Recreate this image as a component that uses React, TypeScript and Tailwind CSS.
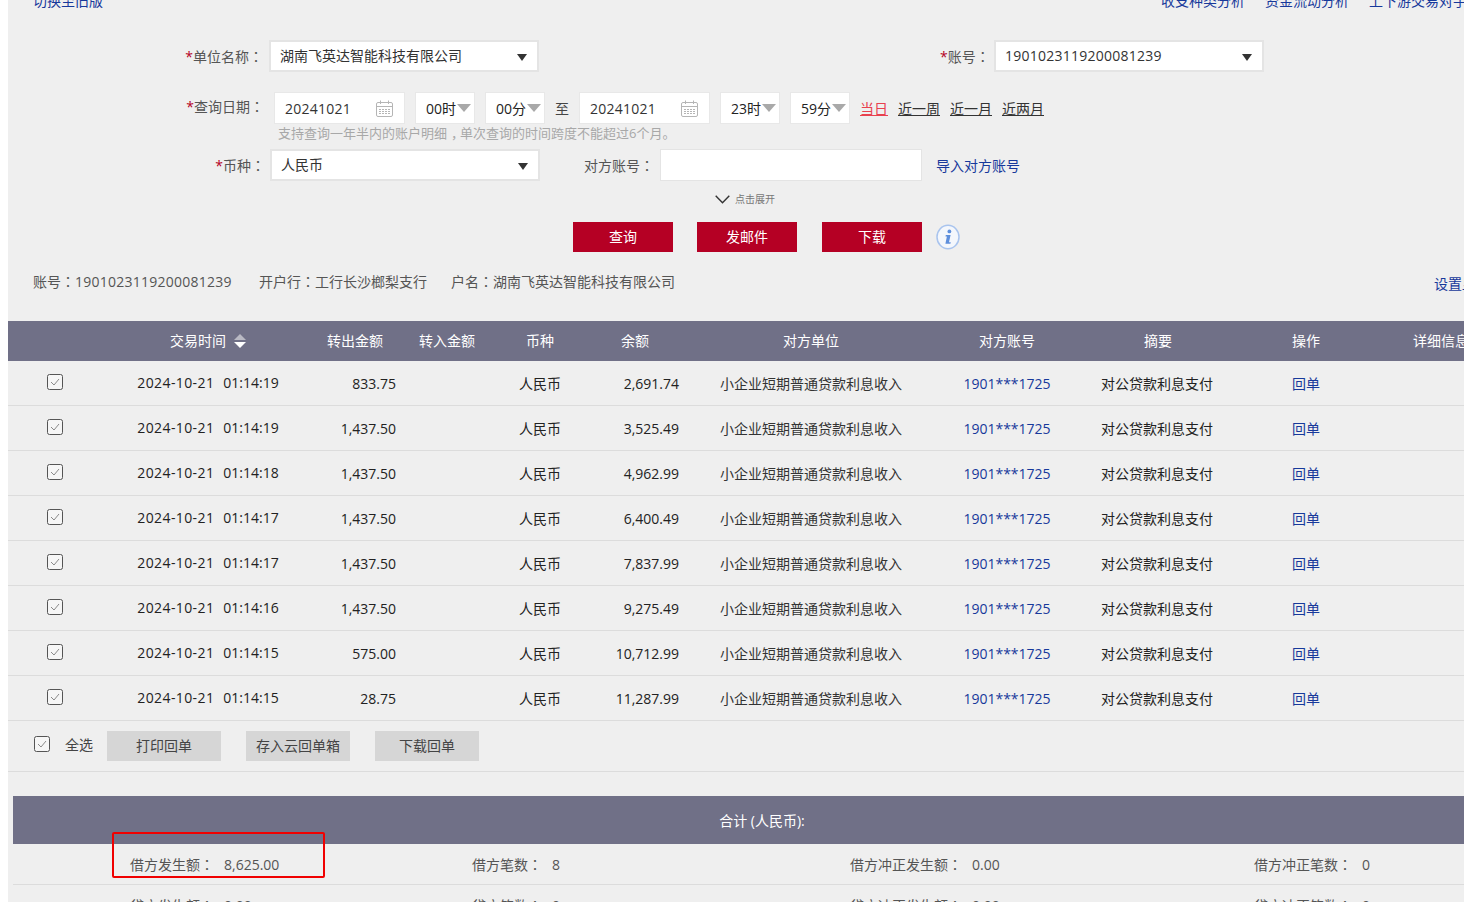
const rows = [
  { time: '01:14:19', out: '833.75', balance: '2,691.74' },
  { time: '01:14:19', out: '1,437.50', balance: '3,525.49' },
  { time: '01:14:18', out: '1,437.50', balance: '4,962.99' },
  { time: '01:14:17', out: '1,437.50', balance: '6,400.49' },
  { time: '01:14:17', out: '1,437.50', balance: '7,837.99' },
  { time: '01:14:16', out: '1,437.50', balance: '9,275.49' },
  { time: '01:14:15', out: '575.00', balance: '10,712.99' },
  { time: '01:14:15', out: '28.75', balance: '11,287.99' },
];

// TC cut of the font centres the full-width colon, like the reference
const Colon = () => <span className="font-['Noto_Sans_CJK_TC',sans-serif]">：</span>;

const Caret = () => (
  <span className="w-0 h-0 mt-[3px] border-x-[5.5px] border-x-transparent border-t-[7px] border-t-[#333]" />
);

const GreyCaret = () => (
  <span className="w-0 h-0 border-x-[7px] border-x-transparent border-t-[8px] border-t-[#a9a9a9]" />
);

const Check = () => (
  <svg width="16" height="16" viewBox="0 0 16 16" className="block">
    <rect x="0.5" y="0.5" width="15" height="15" rx="2" fill="#f6f6f6" stroke="#555" />
    <path d="M4 8 L7 11 L12 5" fill="none" stroke="#8a8a8a" />
  </svg>
);

const Calendar = () => (
  <svg width="17" height="17" viewBox="0 0 17 17" fill="none" stroke="#b5b5b5">
    <rect x="0.5" y="2.5" width="16" height="14" rx="1.5" />
    <path d="M0.5 6.5 H16.5 M4.5 0.5 V4 M12.5 0.5 V4" />
    <path d="M3 9.5 H14 M3 11.5 H14 M3 13.5 H14" strokeDasharray="2 1" />
  </svg>
);

const Label = ({ text, className }: { text: string; className: string }) => (
  <div className={`text-[14px] text-[#555] whitespace-nowrap ${className}`}>
    <span className="text-[#b50024]">*</span>
    {text}
    <Colon />
  </div>
);

const Select = ({ value, numeric, className }: { value: string; numeric?: boolean; className: string }) => (
  <div className={`h-8 bg-white border-2 border-[#e4e4e4] flex items-center justify-between pl-[9px] pr-[10px] text-[14px] text-[#333] ${className}`}>
    <span className={numeric ? 'tracking-[0.25px] -mt-[2px]' : '-mt-[2px]'}>{value}</span>
    <Caret />
  </div>
);

const DateBox = ({ value }: { value: string }) => (
  <div className="w-[131px] h-8 bg-white border border-[#e8e8e8] flex items-center justify-between pl-[10px] pr-[11px] text-[14px] text-[#333]">
    <span className="tracking-[0.25px]">{value}</span>
    <Calendar />
  </div>
);

const TimeBox = ({ value }: { value: string }) => (
  <div className="w-[60px] h-8 bg-white border border-[#e8e8e8] flex items-center pl-[10px] gap-[1px] text-[14px] text-[#222] whitespace-nowrap">
    {value}
    <GreyCaret />
  </div>
);

const RedButton = ({ text }: { text: string }) => (
  <div className="w-[100px] h-[30px] pb-[2px] bg-[#b50024] text-white text-[14px] flex items-center justify-center">{text}</div>
);

const GreyButton = ({ text, className }: { text: string; className: string }) => (
  <div className={`h-[30px] pb-[2px] bg-[#d6d6d6] text-[14px] text-[#444] flex items-center justify-center ${className}`}>{text}</div>
);

const Stat = ({ label, value, className }: { label: string; value: string; className: string }) => (
  <div className={`flex shrink-0 gap-[10px] whitespace-nowrap ${className}`}>
    <span>
      {label}
      <Colon />
    </span>
    <span>{value}</span>
  </div>
);

const App = () => {
  return (
    <div className="w-[1464px] h-[902px] overflow-hidden bg-white pl-2 font-['Open_Sans','Noto_Sans_CJK_SC',sans-serif]">
      <div className="w-[1560px] h-[1000px] bg-[#efefef] -mt-[9px]">
        {/* top links */}
        <div className="h-[49px] flex text-[14px] text-[#17399b] leading-5 whitespace-nowrap">
          <span className="ml-[25px] w-[1128px]">切换至旧版</span>
          <span className="mr-5">收支种类分析</span>
          <span className="mr-5">资金流动分析</span>
          <span>上下游交易对手</span>
        </div>

        {/* query form */}
        <div className="flex items-center h-8">
          <Label text="单位名称" className="w-[261px] text-right pr-[6px]" />
          <Select value="湖南飞英达智能科技有限公司" className="w-[270px]" />
          <Label text="账号" className="ml-[401px] w-[54px]" />
          <Select value="1901023119200081239" numeric className="w-[270px]" />
        </div>

        <div className="flex items-center h-8 mt-5">
          <Label text="查询日期" className="w-[266px] text-right pr-[10px] -mt-1" />
          <DateBox value="20241021" />
          <div className="ml-[10px]"><TimeBox value="00时" /></div>
          <div className="ml-[10px]"><TimeBox value="00分" /></div>
          <span className="w-[34px] text-center text-[14px] text-[#444]">至</span>
          <DateBox value="20241021" />
          <div className="ml-[10px]"><TimeBox value="23时" /></div>
          <div className="ml-[10px]"><TimeBox value="59分" /></div>
          <span className="ml-[10px] text-[14px] text-[#e8414f] underline">当日</span>
          <span className="ml-[10px] text-[14px] text-[#333] underline">近一周</span>
          <span className="ml-[10px] text-[14px] text-[#333] underline">近一月</span>
          <span className="ml-[10px] text-[14px] text-[#333] underline">近两月</span>
        </div>

        <div className="h-[25px] pl-[270px] text-[13px] leading-[19px] text-[#a8a8a8] whitespace-nowrap">
          支持查询一年半内的账户明细<span className="pl-1 tracking-[-4px]">，</span>单次查询的时间跨度不能超过6个月。
        </div>

        <div className="flex items-center h-8">
          <Label text="币种" className="w-[262px] text-right pr-[5px]" />
          <Select value="人民币" className="w-[270px]" />
          <div className="ml-[44px] w-[76px] text-[14px] text-[#555] whitespace-nowrap">对方账号<Colon /></div>
          <div className="w-[262px] h-8 bg-white border border-[#e4e4e4]" />
          <span className="ml-[14px] text-[14px] text-[#17399b]">导入对方账号</span>
        </div>

        <div className="flex items-center h-[18px] mt-[9px] pl-[707px] gap-[5px]">
          <svg width="15" height="9" viewBox="0 0 15 9" fill="none" stroke="#333" strokeWidth="1.4">
            <path d="M0.7 0.7 L7.5 7.8 L14.3 0.7" />
          </svg>
          <span className="text-[10px] text-[#777]">点击展开</span>
        </div>

        <div className="flex items-center mt-[14px] pl-[565px]">
          <RedButton text="查询" />
          <div className="ml-6"><RedButton text="发邮件" /></div>
          <div className="ml-[25px]"><RedButton text="下载" /></div>
          <svg width="24" height="26" viewBox="0 0 24 26" className="ml-[14px]">
            <ellipse cx="12" cy="13" rx="11" ry="11.8" fill="#f4f7fc" stroke="#a9c4ee" strokeWidth="1.5" />
            <circle cx="13.4" cy="7.4" r="1.9" fill="#5e8fdc" />
            <path d="M9.8 11 H14.6 L13 18.2 L14.8 18.2 L14.4 19.8 H9.4 L10.9 12.6 H9.5 Z" fill="#5e8fdc" />
          </svg>
        </div>

        <div className="flex items-center h-5 mt-[19px] pl-[25px] text-[14px] text-[#555] whitespace-nowrap">
          <span className="w-[226px]">账号<Colon /><span className="tracking-[0.25px]">1901023119200081239</span></span>
          <span className="w-[192px]">开户行<Colon />工行长沙榔梨支行</span>
          <span className="w-[983px]">户名<Colon />湖南飞英达智能科技有限公司</span>
          <span className="text-[#17399b] mt-1">设置显示</span>
        </div>

        {/* transactions table */}
        <div className="mt-[30px] h-10 pb-[2px] bg-[#707087] text-white text-[14px] flex items-center text-center">
          <div className="w-[94px]" />
          <div className="w-[212px] flex items-center justify-center gap-2">
            交易时间
            <span className="flex flex-col gap-[2px] mt-[2px]">
              <span className="w-0 h-0 border-x-[6px] border-x-transparent border-b-[6px] border-b-[#b9b9c4]" />
              <span className="w-0 h-0 border-x-[6px] border-x-transparent border-t-[6px] border-t-white" />
            </span>
          </div>
          <div className="w-[82px]">转出金额</div>
          <div className="w-[102px]">转入金额</div>
          <div className="w-[84px]">币种</div>
          <div className="w-[106px]">余额</div>
          <div className="w-[246px]">对方单位</div>
          <div className="w-[146px]">对方账号</div>
          <div className="w-[154px] pl-[2px]">摘要</div>
          <div className="w-[144px]">操作</div>
          <div className="w-[126px]">详细信息</div>
        </div>
        {rows.map((row, i) => (
          <div key={i} className="h-[45px] border-b border-[#dcdcdc] flex items-center text-[14px] text-[#222] text-center">
            <div className="w-[94px] flex justify-center -mt-[2px]"><Check /></div>
            <div className="w-[212px] flex justify-center gap-[9px] -mt-[1px]">
              <span className="tracking-[0.4px]">2024-10-21</span>
              <span>{row.time}</span>
            </div>
            <div className="w-[82px] text-right">{row.out}</div>
            <div className="w-[102px]" />
            <div className="w-[84px]">人民币</div>
            <div className="w-[106px] text-right pr-[9px]">{row.balance}</div>
            <div className="w-[246px] text-[#333]">小企业短期普通贷款利息收入</div>
            <div className="w-[146px] text-[#17399b] mt-[1px]">1901***1725</div>
            <div className="w-[154px]">对公贷款利息支付</div>
            <div className="w-[144px] text-[#17399b] mt-[1px]">回单</div>
          </div>
        ))}
        <div className="h-[51px] border-b border-[#dcdcdc] flex items-center text-[14px]">
          <div className="ml-[26px] -mt-[5px]"><Check /></div>
          <span className="ml-[15px] w-[42px] text-[#444] -mt-1">全选</span>
          <GreyButton text="打印回单" className="w-[114px]" />
          <GreyButton text="存入云回单箱" className="ml-[25px] w-[104px]" />
          <GreyButton text="下载回单" className="ml-[25px] w-[104px]" />
        </div>

        {/* totals */}
        <div className="relative ml-[5px] mt-6">
          <div className="h-12 bg-[#707087] text-white text-[14px] flex items-center justify-center w-[1498px]">合计 (人民币):</div>
          <div className="h-[41px] border-b border-[#dcdcdc] flex items-center pl-[117px] text-[14px] text-[#555]">
            <Stat label="借方发生额" value="8,625.00" className="w-[342px]" />
            <Stat label="借方笔数" value="8" className="w-[378px]" />
            <Stat label="借方冲正发生额" value="0.00" className="w-[404px]" />
            <Stat label="借方冲正笔数" value="0" className="w-[200px]" />
          </div>
          <div className="h-[41px] flex items-center pl-[117px] text-[14px] text-[#555]">
            <Stat label="贷方发生额" value="0.00" className="w-[342px]" />
            <Stat label="贷方笔数" value="0" className="w-[378px]" />
            <Stat label="贷方冲正发生额" value="0.00" className="w-[404px]" />
            <Stat label="贷方冲正笔数" value="0" className="w-[200px]" />
          </div>
          {/* red annotation drawn over the screenshot */}
          <div className="absolute left-[99px] top-[36px] w-[213px] h-[46px] border-2 border-[#f00000] rounded-[2px]" />
        </div>
      </div>
    </div>
  );
};

export default App;
